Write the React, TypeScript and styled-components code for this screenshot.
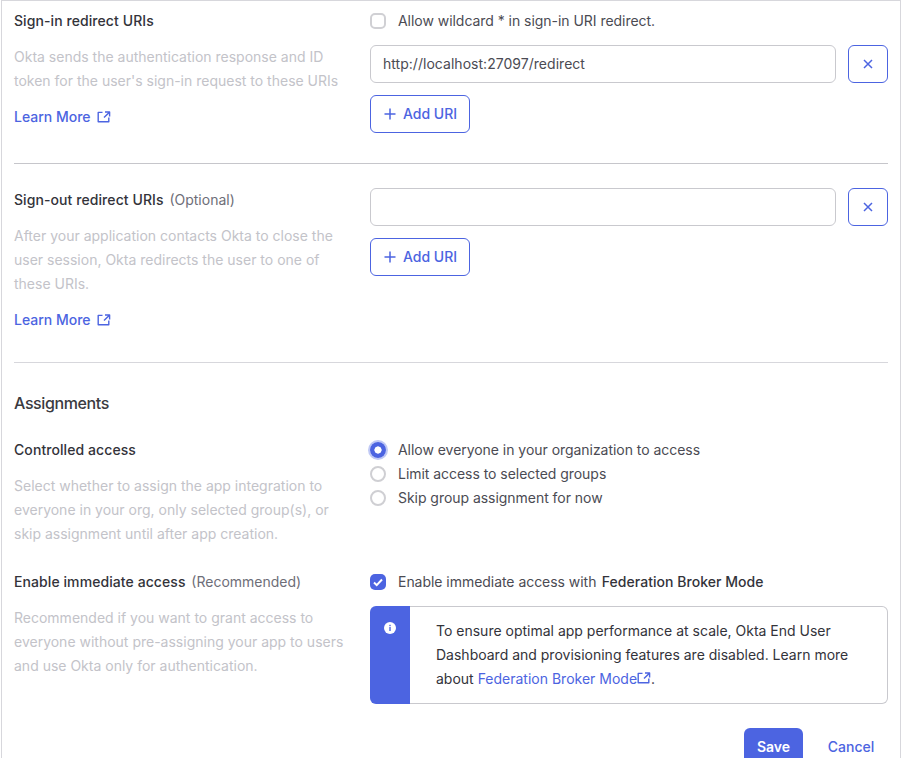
import React from "react";
import styled, { createGlobalStyle } from "styled-components";

const Global = createGlobalStyle`
  html, body { margin: 0; padding: 0; height: 758px; overflow: hidden; background: #fff; }
  body { font-family: Inter, "Liberation Sans", sans-serif; font-size: 14px; line-height: 24px; color: #33333a; }
  * { box-sizing: border-box; }
`;

const Card = styled.main`
  margin-left: 1px;
  width: 900px;
  border: 1px solid #d7d7dc;
  border-bottom: none;
  padding: 8px 12px 0 12px;
`;

const Section = styled.section<{ $pad: number }>`
  display: grid;
  grid-template-columns: 356px 518px;
  padding-bottom: ${(p) => p.$pad}px;
`;

const Rule = styled.hr<{ $light?: boolean }>`
  margin: 0 0 24px;
  border: none;
  border-top: 1px solid ${(p) => (p.$light ? "#d7d7dc" : "#c6c6cb")};
`;

const Info = styled.div`
  display: flex;
  flex-direction: column;
  width: 332px;
`;

const Title = styled.div`
  font-weight: 500;
  letter-spacing: 0.08px;
  color: #33333a;
`;

const Optional = styled.span`
  font-weight: 400;
  letter-spacing: 0;
  color: #6e6e78;
  margin-left: 2px;
`;

const Help = styled.p`
  margin: 12px 0 0;
  color: #c3c3c9;
`;

const LearnLink = styled.a`
  display: flex;
  align-items: center;
  gap: 6px;
  margin-top: 12px;
  font-weight: 500;
  color: #4c64e1;
`;

const Controls = styled.div`
  display: flex;
  flex-direction: column;
`;

const OptionRow = styled.label`
  display: flex;
  align-items: center;
  gap: 12px;
  height: 24px;
  color: #4b4b53;
  letter-spacing: -0.04px;
`;

const Emphasis = styled.b`
  font-weight: 500;
  letter-spacing: 0.04px;
  color: #33333a;
  margin-left: 1.5px;
`;

const CheckBox = styled.span<{ $on?: boolean }>`
  display: flex;
  align-items: center;
  justify-content: center;
  width: 16px;
  height: 16px;
  border-radius: 5px;
  background: ${(p) => (p.$on ? "#4c64e1" : "#fff")};
  border: ${(p) => (p.$on ? "none" : "2px solid #d0d0d4")};
`;

const Radio = styled.span<{ $on?: boolean }>`
  display: block;
  width: 16px;
  height: 16px;
  border-radius: 50%;
  background: ${(p) => (p.$on ? "radial-gradient(circle, #fff 3.3px, #4c64e1 3.9px)" : "#fff")};
  border: ${(p) => (p.$on ? "none" : "2px solid #cfcfd3")};
  box-shadow: ${(p) => (p.$on ? "0 0 0 2px #c0c9f5" : "none")};
`;

const UriRow = styled.div<{ $top?: number }>`
  display: flex;
  gap: 12px;
  margin-top: ${(p) => p.$top ?? 0}px;
`;

const UriInput = styled.div`
  flex: 1;
  height: 38px;
  padding: 0 12px;
  display: flex;
  align-items: center;
  border: 1px solid #c9c9ce;
  border-radius: 6px;
  color: #4b4b53;
  letter-spacing: 0.03px;
`;

const OutlineButton = styled.button<{ $square?: boolean }>`
  display: inline-flex;
  align-items: center;
  justify-content: center;
  gap: 6px;
  height: 38px;
  width: ${(p) => (p.$square ? "40px" : "100px")};
  padding: 0;
  font: 500 14px/24px Inter, "Liberation Sans", sans-serif;
  color: #4c64e1;
  background: #fff;
  border: 1px solid #4c64e1;
  border-radius: 6px;
`;

const AddButton = styled(OutlineButton)`
  margin-top: 12px;
  align-self: flex-start;
`;

const Heading = styled.h2`
  margin: 0 0 19px;
  font-size: 16px;
  line-height: 32px;
  font-weight: 500;
  letter-spacing: -0.4px;
  color: #3a3a40;
`;

const Callout = styled.div`
  display: flex;
  height: 98px;
  margin-top: 12px;
`;

const CalloutIcon = styled.div`
  flex: 0 0 40px;
  background: #4c64e1;
  border-radius: 6px 0 0 6px;
  display: flex;
  justify-content: center;
  padding-top: 16px;
`;

const CalloutText = styled.div`
  flex: 1;
  padding: 12px 24px 0 26px;
  color: #33333a;
  border: 1px solid #c9c9ce;
  border-left: none;
  border-radius: 0 6px 6px 0;
`;

const InlineLink = styled.a`
  color: #4c64e1;
`;

const InlineIcon = styled.span`
  display: inline-block;
  vertical-align: -1px;
`;

const Footer = styled.footer`
  display: flex;
  justify-content: flex-end;
  margin-top: 24px;
  padding-right: 1px;
`;

const SaveButton = styled.button`
  width: 59px;
  height: 38px;
  padding: 0;
  border: none;
  border-radius: 6px;
  background: #4c64e1;
  color: #fff;
  font: 600 14px/24px Inter, "Liberation Sans", sans-serif;
`;

const CancelButton = styled.button`
  width: 84px;
  height: 38px;
  padding: 0 0 0 12px;
  border: none;
  background: none;
  color: #4c64e1;
  font: 500 14px/24px Inter, "Liberation Sans", sans-serif;
`;

const External = () => (
  <svg width="14" height="14" viewBox="0 0 14 14" fill="none" stroke="#4c64e1" strokeWidth="1.4" strokeLinejoin="round">
    <path d="M5.5 2.4H1.2v9.3h10.6V7.5" />
    <path d="M8 2h4.6v4.4M12.4 2.2L7 7.6" />
  </svg>
);

const Plus = () => (
  <svg width="14" height="14" viewBox="0 0 14 14" fill="none" stroke="#4c64e1" strokeWidth="1.5">
    <path d="M7 1.5v11M1.5 7h11" />
  </svg>
);

const Cross = () => (
  <svg width="12" height="12" viewBox="0 0 12 12" fill="none" stroke="#4c64e1" strokeWidth="1.5">
    <path d="M2 2l8 8M10 2l-8 8" />
  </svg>
);

const Tick = () => (
  <svg width="12" height="12" viewBox="0 0 12 12" fill="none" stroke="#fff" strokeWidth="2">
    <path d="M2 6.5l2.7 2.6L10 3.5" />
  </svg>
);

const InfoGlyph = () => (
  <svg width="12" height="12" viewBox="0 0 12 12">
    <circle cx="6" cy="6" r="6" fill="#fff" />
    <rect x="5.3" y="5" width="1.4" height="4" fill="#4c64e1" />
    <rect x="5.3" y="2.8" width="1.4" height="1.4" fill="#4c64e1" />
  </svg>
);

const AddUri = () => (
  <AddButton>
    <Plus /> Add URI
  </AddButton>
);

export default function App() {
  return (
    <>
      <Global />
      <Card>
        <Section $pad={30}>
          <Info>
            <Title>Sign-in redirect URIs</Title>
            <Help>Okta sends the authentication response and ID token for the user's sign-in request to these URIs</Help>
            <LearnLink>Learn More <External /></LearnLink>
          </Info>
          <Controls>
            <OptionRow><CheckBox /> Allow wildcard * in sign-in URI redirect.</OptionRow>
            <UriRow $top={12}>
              <UriInput>http://localhost:27097/redirect</UriInput>
              <OutlineButton $square><Cross /></OutlineButton>
            </UriRow>
            <AddUri />
          </Controls>
        </Section>
        <Rule />
        <Section $pad={30}>
          <Info>
            <Title>Sign-out redirect URIs <Optional>(Optional)</Optional></Title>
            <Help>After your application contacts Okta to close the user session, Okta redirects the user to one of these URIs.</Help>
            <LearnLink>Learn More <External /></LearnLink>
          </Info>
          <Controls>
            <UriRow>
              <UriInput />
              <OutlineButton $square><Cross /></OutlineButton>
            </UriRow>
            <AddUri />
          </Controls>
        </Section>
        <Rule $light />
        <Heading>Assignments</Heading>
        <Section $pad={24}>
          <Info>
            <Title>Controlled access</Title>
            <Help>Select whether to assign the app integration to everyone in your org, only selected group(s), or skip assignment until after app creation.</Help>
          </Info>
          <Controls>
            <OptionRow><Radio $on /> Allow everyone in your organization to access</OptionRow>
            <OptionRow><Radio /> Limit access to selected groups</OptionRow>
            <OptionRow><Radio /> Skip group assignment for now</OptionRow>
          </Controls>
        </Section>
        <Section $pad={0}>
          <Info>
            <Title>Enable immediate access <Optional>(Recommended)</Optional></Title>
            <Help>Recommended if you want to grant access to everyone without pre-assigning your app to users and use Okta only for authentication.</Help>
          </Info>
          <Controls>
            <OptionRow>
              <CheckBox $on><Tick /></CheckBox>
              <span>Enable immediate access with <Emphasis>Federation Broker Mode</Emphasis></span>
            </OptionRow>
            <Callout>
              <CalloutIcon><InfoGlyph /></CalloutIcon>
              <CalloutText>
                To ensure optimal app performance at scale, Okta End User Dashboard and provisioning features are disabled. Learn more about{" "}
                <InlineLink>Federation Broker Mode<InlineIcon><External /></InlineIcon></InlineLink>.
              </CalloutText>
            </Callout>
          </Controls>
        </Section>
        <Footer>
          <SaveButton>Save</SaveButton>
          <CancelButton>Cancel</CancelButton>
        </Footer>
      </Card>
    </>
  );
}
